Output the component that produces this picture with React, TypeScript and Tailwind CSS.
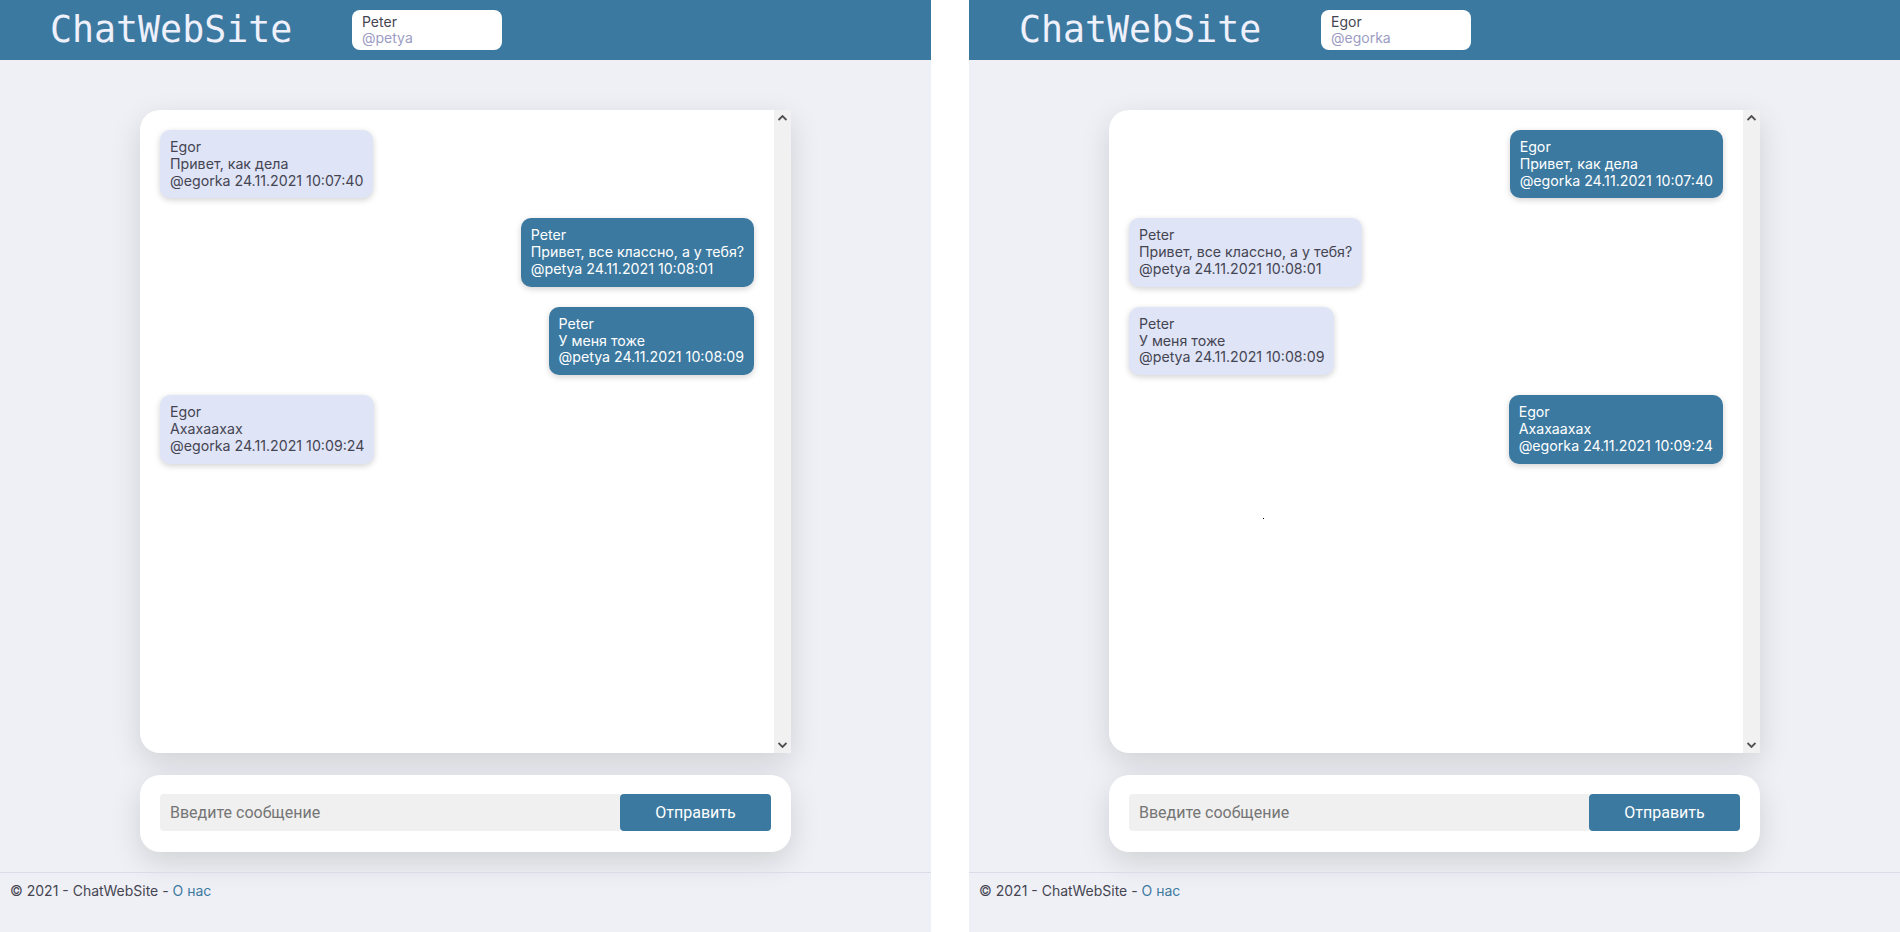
import React from 'react'

type Msg = {
  name: string
  handle: string
  text: string
  time: string
}

const MESSAGES: Msg[] = [
  { name: 'Egor', handle: 'egorka', text: 'Привет, как дела', time: '24.11.2021 10:07:40' },
  { name: 'Peter', handle: 'petya', text: 'Привет, все классно, а у тебя?', time: '24.11.2021 10:08:01' },
  { name: 'Peter', handle: 'petya', text: 'У меня тоже', time: '24.11.2021 10:08:09' },
  { name: 'Egor', handle: 'egorka', text: 'Ахахаахах', time: '24.11.2021 10:09:24' },
]

const sans = "font-['Inter','Noto_Sans',sans-serif]"

function Bubble({ msg, mine }: { msg: Msg; mine: boolean }) {
  return (
    <div
      className={[
        'rounded-[10px] px-[10px] py-[9px] text-[14.2px] leading-[16.8px] shadow-[0_2px_6px_rgba(0,0,0,0.18)]',
        mine ? 'self-end bg-[#3c79a0] text-white' : 'self-start bg-[#dfe4f7] text-[#454552]',
      ].join(' ')}
    >
      <div>{msg.name}</div>
      <div>{msg.text}</div>
      <div>
        @{msg.handle} {msg.time}
      </div>
    </div>
  )
}

function ScrollStrip() {
  return (
    <div className="flex w-[17px] flex-col items-center justify-between bg-[#f1f1f1] py-[5px]">
      <svg width="9" height="6" viewBox="0 0 9 6">
        <path d="M0.5 5 L4.5 1 L8.5 5" fill="none" stroke="#505050" strokeWidth="1.8" />
      </svg>
      <svg width="9" height="6" viewBox="0 0 9 6">
        <path d="M0.5 1 L4.5 5 L8.5 1" fill="none" stroke="#505050" strokeWidth="1.8" />
      </svg>
    </div>
  )
}

function Panel({ user, handle, withDot }: { user: string; handle: string; withDot?: boolean }) {
  return (
    <div className={`flex h-[932px] w-[931px] flex-shrink-0 flex-col bg-[#eff0f5] ${sans}`}>
      {/* Header */}
      <header className="flex h-[60px] items-center bg-[#3c79a0]">
        <span className="ml-[50px] w-[240px] font-['DejaVu_Sans_Mono',monospace] text-[36.6px] leading-none whitespace-nowrap text-[#eef0fb]">
          ChatWebSite
        </span>
        <div className="ml-[62px] flex h-[40px] w-[150px] flex-col justify-center rounded-[8px] bg-white px-[10px] text-[14px] leading-[16px]">
          <span className="text-[#454552]">{user}</span>
          <span className="text-[#9c9cc4]">@{handle}</span>
        </div>
      </header>

      {/* Chat */}
      <main className="flex flex-col items-center pt-[50px]">
        <div className="flex h-[643px] w-[651px] overflow-hidden rounded-l-[20px] bg-white shadow-[0_10px_30px_rgba(0,0,0,0.13)]">
          <div className="relative flex flex-1 flex-col gap-[20px] p-[20px]">
            {MESSAGES.map((m, i) => (
              <Bubble key={i} msg={m} mine={m.name === user} />
            ))}
            {withDot && <span className="absolute left-[154px] top-[408px] h-[1px] w-[1px] bg-black" />}
          </div>
          <ScrollStrip />
        </div>

        <div className="mt-[22px] flex h-[77px] w-[651px] items-start rounded-[20px] bg-white px-[20px] pt-[19px] shadow-[0_10px_30px_rgba(0,0,0,0.13)]">
          <input
            placeholder="Введите сообщение"
            className="h-[37px] flex-1 rounded-l-[4px] bg-[#f0f0f0] px-[10px] font-['Roboto',sans-serif] text-[16px] text-[#333] outline-none placeholder:text-[#757575]"
          />
          <button className="h-[37px] w-[151px] rounded-[4px] bg-[#3c79a0] font-['Roboto',sans-serif] text-[16px] text-white">
            Отправить
          </button>
        </div>
      </main>

      {/* Footer */}
      <footer className="mt-[20px] border-t border-[#dcdce8] px-[10px] pt-[9px] text-[14px] leading-[18px] text-[#454552]">
        © 2021 - ChatWebSite - <span className="text-[#3c79a0]">О нас</span>
      </footer>
    </div>
  )
}

export default function App() {
  return (
    <div className="flex h-[932px] w-[1900px] gap-[38px] overflow-hidden bg-white">
      <Panel user="Peter" handle="petya" />
      <Panel user="Egor" handle="egorka" withDot />
    </div>
  )
}
